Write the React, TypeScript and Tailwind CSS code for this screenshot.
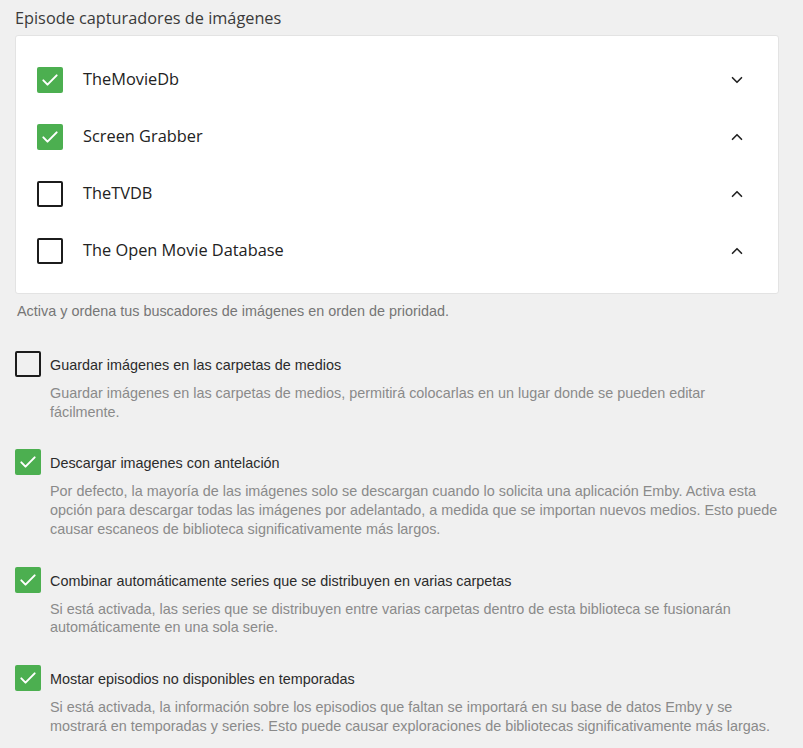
import { ChevronDown, ChevronUp } from "lucide-react";

const fetchers = [
  { name: "TheMovieDb", on: true, open: true },
  { name: "Screen Grabber", on: true, open: false },
  { name: "TheTVDB", on: false, open: false },
  { name: "The Open Movie Database", on: false, open: false },
];

const options = [
  {
    label: "Guardar imágenes en las carpetas de medios",
    on: false,
    desc: "Guardar imágenes en las carpetas de medios, permitirá colocarlas en un lugar donde se pueden editar\nfácilmente.",
  },
  {
    label: "Descargar imagenes con antelación",
    on: true,
    desc: "Por defecto, la mayoría de las imágenes solo se descargan cuando lo solicita una aplicación Emby. Activa esta opción para descargar todas las imágenes por adelantado, a medida que se importan nuevos medios. Esto puede causar escaneos de biblioteca significativamente más largos.",
  },
  {
    label: "Combinar automáticamente series que se distribuyen en varias carpetas",
    on: true,
    desc: "Si está activada, las series que se distribuyen entre varias carpetas dentro de esta biblioteca se fusionarán automáticamente en una sola serie.",
  },
  {
    label: "Mostar episodios no disponibles en temporadas",
    on: true,
    desc: "Si está activada, la información sobre los episodios que faltan se importará en su base de datos Emby y se mostrará en temporadas y series. Esto puede causar exploraciones de bibliotecas significativamente más largas.",
  },
];

function Box({ on }: { on: boolean }) {
  if (on) {
    return (
      <div className="size-[26px] shrink-0 rounded-[2px] bg-[#4caf50] flex items-center justify-center">
        <svg width="20" height="20" viewBox="0 0 24 24" fill="none" stroke="white" strokeWidth="2.4" strokeLinecap="round" strokeLinejoin="round">
          <path d="M4 12.5l5 5L20 6.5" />
        </svg>
      </div>
    );
  }
  return <div className="size-[26px] shrink-0 rounded-[2px] border-2 border-[#1c1c1c] bg-transparent" />;
}

export default function App() {
  return (
    <div className="min-h-[748px] bg-[#f0f0f0] px-[15px] pt-[6px] pr-[24px] font-['Liberation_Sans',Arial,sans-serif]">
      <h2 className="font-['Open_Sans',sans-serif] text-[16.3px] leading-[24px] text-[#3a3a3a]">
        Episode capturadores de imágenes
      </h2>
      <div className="mt-[5px] bg-white border border-[#e3e3e3] rounded-[3px] pt-[15px] pb-[14px] pl-[21px] pr-[32px]">
        {fetchers.map((f) => (
          <div key={f.name} className="flex items-center h-[57px]">
            <Box on={f.on} />
            <span className="ml-[20px] flex-1 font-['Open_Sans',sans-serif] text-[16.35px] text-[#222]">{f.name}</span>
            {f.open ? (
              <ChevronDown size={18} strokeWidth={2.2} className="text-[#222]" />
            ) : (
              <ChevronUp size={18} strokeWidth={2.2} className="text-[#222]" />
            )}
          </div>
        ))}
      </div>
      <p className="mt-[8px] pl-[2px] text-[14.4px] leading-[18px] text-[#767676]">
        Activa y ordena tus buscadores de imágenes en orden de prioridad.
      </p>
      <div className="mt-[31px] flex flex-col gap-[28px]">
        {options.map((o) => (
          <div key={o.label} className="flex gap-[9px]">
            <Box on={o.on} />
            <div className="pt-[5px] max-w-[730px]">
              <div className="text-[14.4px] leading-[18px] text-[#2b2b2b]">{o.label}</div>
              <div className="mt-[10px] whitespace-pre-line text-[14.4px] leading-[18.7px] text-[#8a8a8a]">{o.desc}</div>
            </div>
          </div>
        ))}
      </div>
    </div>
  );
}
